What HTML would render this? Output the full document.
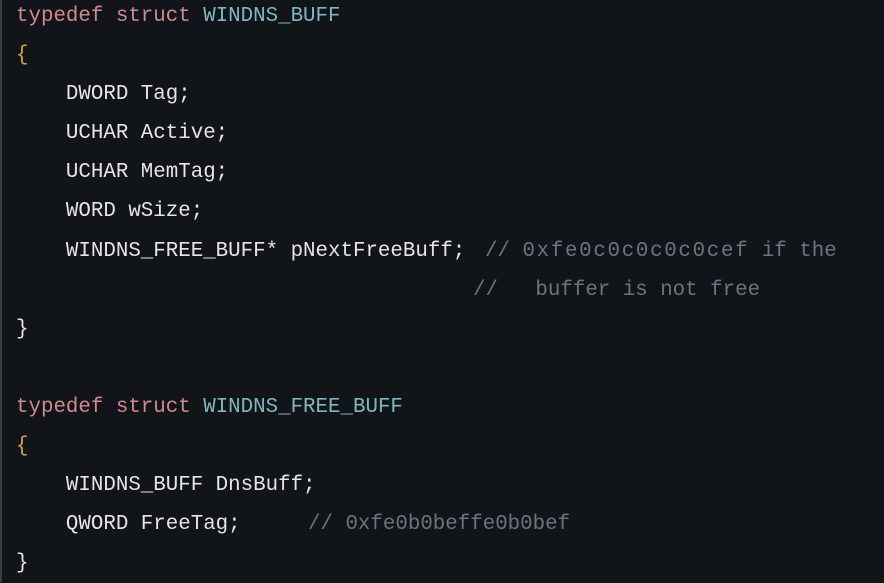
<!DOCTYPE html>
<html><head><meta charset="utf-8"><style>
html,body{margin:0;padding:0;background:#111418;width:884px;height:582px;overflow:hidden}
body{border-left:2px solid #3a3f46;box-sizing:border-box}
pre{margin:0;position:absolute;left:16px;top:-3px;font-family:"Liberation Mono",monospace;font-size:20.8px;line-height:39.1px;color:#e3e5e8}
.k{color:#cf8a8d}.t{color:#7db8be}.b{color:#d8a72a}.c{color:#6c747e}.h{letter-spacing:1.7px}
.abs{position:absolute;font-family:"Liberation Mono",monospace;font-size:20.8px;line-height:39.1px;color:#6c747e;margin:0}
</style></head><body>
<pre><span class="k">typedef struct</span> <span class="t">WINDNS_BUFF</span>
<span class="b">{</span>
    DWORD Tag;
    UCHAR Active;
    UCHAR MemTag;
    WORD wSize;
    WINDNS_FREE_BUFF* pNextFreeBuff;

<span>}</span>

<span class="k">typedef struct</span> <span class="t">WINDNS_FREE_BUFF</span>
<span class="b">{</span>
    WINDNS_BUFF DnsBuff;
    QWORD FreeTag;
}</pre>
<div class="abs" style="left:485px;top:232px">// <span class="h">0xfe0c0c0c0c0cef</span> if the</div>
<div class="abs" style="left:473px;top:271px;white-space:pre">//   buffer is not free</div>
<div class="abs" style="left:308px;top:505px">// 0xfe0b0beffe0b0bef</div>
</body></html>
